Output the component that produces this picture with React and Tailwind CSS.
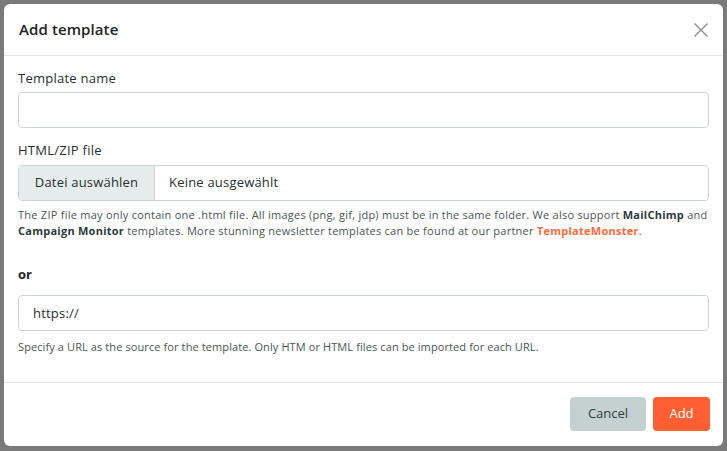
export default function App() {
  return (
    <div
      className="w-[727px] h-[451px] bg-[#7a7a7a] pt-[4px] pl-[4px] pr-[4px] pb-[5px]"
      style={{ fontFamily: '"Open Sans", "Liberation Sans", sans-serif' }}
    >
      <div className="h-full bg-white rounded-[6px] flex flex-col overflow-hidden">
        <div className="h-[52px] px-[15px] flex items-center justify-between border-b border-[#e3e8e8] shrink-0">
          <h2 className="text-[15px] font-semibold tracking-[0.1px] text-[#1d2424]">Add template</h2>
          <button className="text-[#8a9090] mr-[-1px]">
            <svg width="16" height="16" viewBox="0 0 16 16" fill="none" stroke="currentColor" strokeWidth="1.4">
              <path d="M1.5 1.5l13 13M14.5 1.5l-13 13" />
            </svg>
          </button>
        </div>

        <div className="flex-1 px-[14px] pt-[12px]">
          <label className="block text-[13px] leading-[20px] tracking-[0.25px] text-[#263030] mb-[4px]">
            Template name
          </label>
          <input className="block w-full h-[36px] border border-[#cdd5d5] rounded-[4px] px-[14px] text-[13px] outline-none" />

          <label className="block text-[13px] leading-[20px] tracking-[0.25px] text-[#263030] mt-[12px] mb-[5px]">
            HTML/ZIP file
          </label>
          <div className="flex h-[36px] border border-[#cdd5d5] rounded-[4px] overflow-hidden text-[13px] tracking-[0.2px] text-[#263030]">
            <div className="w-[136px] bg-[#e6ecec] border-r border-[#cdd5d5] flex items-center justify-center">
              Datei auswählen
            </div>
            <div className="flex items-center pl-[14px]">Keine ausgewählt</div>
          </div>
          <p className="mt-[6px] text-[11px] leading-[16px] tracking-[0.25px] text-[#4a5656]">
            The ZIP file may only contain one .html file. All images (png, gif, jdp) must be in the same folder. We also
            support <span className="font-bold text-[#2c3a3a]">MailChimp</span> and
            <br />
            <span className="font-bold text-[#2c3a3a]">Campaign Monitor</span> templates. More stunning newsletter
            templates can be found at our partner{" "}
            <span className="font-bold text-[#ff6a3d]">TemplateMonster</span>.
          </p>

          <div className="mt-[25px] mb-[11px] text-[13px] leading-[20px] font-bold text-[#1d2424]">or</div>
          <input
            defaultValue="https://"
            className="block w-full h-[36px] border border-[#cdd5d5] rounded-[4px] px-[14px] text-[13px] tracking-[0.2px] text-[#263030] outline-none"
          />
          <p className="mt-[8px] text-[11px] leading-[16px] tracking-[0.1px] text-[#4a5656]">
            Specify a URL as the source for the template. Only HTM or HTML files can be imported for each URL.
          </p>
        </div>

        <div className="h-[64px] border-t border-[#e3e8e8] flex items-start justify-end gap-[7px] pt-[14px] pr-[13px] shrink-0">
          <button className="h-[34px] w-[76px] rounded-[4px] bg-[#c5d0d0] text-[13px] font-medium text-[#2d4040]">
            Cancel
          </button>
          <button className="h-[34px] w-[57px] rounded-[4px] bg-[#ff5f33] text-[13px] font-medium text-white">
            Add
          </button>
        </div>
      </div>
    </div>
  );
}
